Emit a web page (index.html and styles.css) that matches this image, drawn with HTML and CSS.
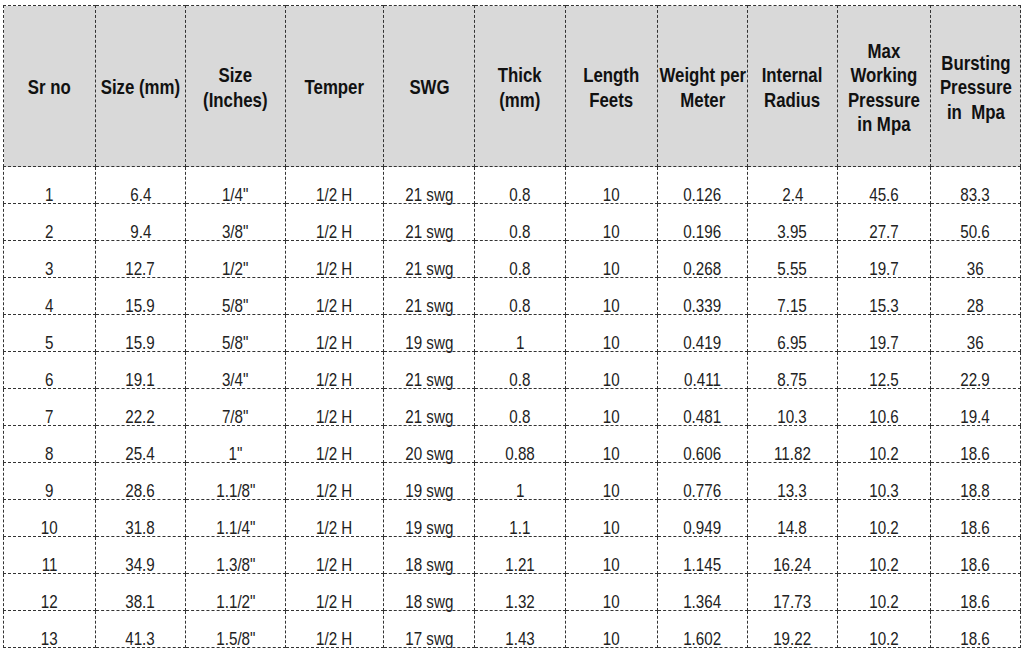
FILE: index.html
```html
<!DOCTYPE html>
<html lang="en">
<head>
<meta charset="utf-8">
<title>Copper Tube Specifications</title>
<link rel="stylesheet" href="styles.css">
</head>
<body>
<table class="spec">
  <colgroup>
    <col class="c1"><col class="c2"><col class="c3"><col class="c4"><col class="c5"><col class="c6">
    <col class="c7"><col class="c8"><col class="c9"><col class="c10"><col class="c11">
  </colgroup>
  <thead>
    <tr>
      <th><span class="n">Sr no</span></th>
      <th><span class="n">Size (mm)</span></th>
      <th><span class="n">Size<br>(Inches)</span></th>
      <th><span class="n">Temper</span></th>
      <th><span class="n">SWG</span></th>
      <th><span class="n">Thick<br>(mm)</span></th>
      <th><span class="n">Length<br>Feets</span></th>
      <th><span class="n">Weight per<br>Meter</span></th>
      <th><span class="n">Internal<br>Radius</span></th>
      <th><span class="n">Max<br>Working<br>Pressure<br>in Mpa</span></th>
      <th><span class="n">Bursting<br>Pressure<br>in&nbsp; Mpa</span></th>
    </tr>
  </thead>
  <tbody>
    <tr><td><span class="n">1</span></td><td><span class="n">6.4</span></td><td><span class="n">1/4"</span></td><td><span class="n">1/2 H</span></td><td><span class="n">21 swg</span></td><td><span class="n">0.8</span></td><td><span class="n">10</span></td><td><span class="n">0.126</span></td><td><span class="n">2.4</span></td><td><span class="n">45.6</span></td><td><span class="n">83.3</span></td></tr>
    <tr><td><span class="n">2</span></td><td><span class="n">9.4</span></td><td><span class="n">3/8"</span></td><td><span class="n">1/2 H</span></td><td><span class="n">21 swg</span></td><td><span class="n">0.8</span></td><td><span class="n">10</span></td><td><span class="n">0.196</span></td><td><span class="n">3.95</span></td><td><span class="n">27.7</span></td><td><span class="n">50.6</span></td></tr>
    <tr><td><span class="n">3</span></td><td><span class="n">12.7</span></td><td><span class="n">1/2"</span></td><td><span class="n">1/2 H</span></td><td><span class="n">21 swg</span></td><td><span class="n">0.8</span></td><td><span class="n">10</span></td><td><span class="n">0.268</span></td><td><span class="n">5.55</span></td><td><span class="n">19.7</span></td><td><span class="n">36</span></td></tr>
    <tr><td><span class="n">4</span></td><td><span class="n">15.9</span></td><td><span class="n">5/8"</span></td><td><span class="n">1/2 H</span></td><td><span class="n">21 swg</span></td><td><span class="n">0.8</span></td><td><span class="n">10</span></td><td><span class="n">0.339</span></td><td><span class="n">7.15</span></td><td><span class="n">15.3</span></td><td><span class="n">28</span></td></tr>
    <tr><td><span class="n">5</span></td><td><span class="n">15.9</span></td><td><span class="n">5/8"</span></td><td><span class="n">1/2 H</span></td><td><span class="n">19 swg</span></td><td><span class="n">1</span></td><td><span class="n">10</span></td><td><span class="n">0.419</span></td><td><span class="n">6.95</span></td><td><span class="n">19.7</span></td><td><span class="n">36</span></td></tr>
    <tr><td><span class="n">6</span></td><td><span class="n">19.1</span></td><td><span class="n">3/4"</span></td><td><span class="n">1/2 H</span></td><td><span class="n">21 swg</span></td><td><span class="n">0.8</span></td><td><span class="n">10</span></td><td><span class="n">0.411</span></td><td><span class="n">8.75</span></td><td><span class="n">12.5</span></td><td><span class="n">22.9</span></td></tr>
    <tr><td><span class="n">7</span></td><td><span class="n">22.2</span></td><td><span class="n">7/8"</span></td><td><span class="n">1/2 H</span></td><td><span class="n">21 swg</span></td><td><span class="n">0.8</span></td><td><span class="n">10</span></td><td><span class="n">0.481</span></td><td><span class="n">10.3</span></td><td><span class="n">10.6</span></td><td><span class="n">19.4</span></td></tr>
    <tr><td><span class="n">8</span></td><td><span class="n">25.4</span></td><td><span class="n">1"</span></td><td><span class="n">1/2 H</span></td><td><span class="n">20 swg</span></td><td><span class="n">0.88</span></td><td><span class="n">10</span></td><td><span class="n">0.606</span></td><td><span class="n">11.82</span></td><td><span class="n">10.2</span></td><td><span class="n">18.6</span></td></tr>
    <tr><td><span class="n">9</span></td><td><span class="n">28.6</span></td><td><span class="n">1.1/8"</span></td><td><span class="n">1/2 H</span></td><td><span class="n">19 swg</span></td><td><span class="n">1</span></td><td><span class="n">10</span></td><td><span class="n">0.776</span></td><td><span class="n">13.3</span></td><td><span class="n">10.3</span></td><td><span class="n">18.8</span></td></tr>
    <tr><td><span class="n">10</span></td><td><span class="n">31.8</span></td><td><span class="n">1.1/4"</span></td><td><span class="n">1/2 H</span></td><td><span class="n">19 swg</span></td><td><span class="n">1.1</span></td><td><span class="n">10</span></td><td><span class="n">0.949</span></td><td><span class="n">14.8</span></td><td><span class="n">10.2</span></td><td><span class="n">18.6</span></td></tr>
    <tr><td><span class="n">11</span></td><td><span class="n">34.9</span></td><td><span class="n">1.3/8"</span></td><td><span class="n">1/2 H</span></td><td><span class="n">18 swg</span></td><td><span class="n">1.21</span></td><td><span class="n">10</span></td><td><span class="n">1.145</span></td><td><span class="n">16.24</span></td><td><span class="n">10.2</span></td><td><span class="n">18.6</span></td></tr>
    <tr><td><span class="n">12</span></td><td><span class="n">38.1</span></td><td><span class="n">1.1/2"</span></td><td><span class="n">1/2 H</span></td><td><span class="n">18 swg</span></td><td><span class="n">1.32</span></td><td><span class="n">10</span></td><td><span class="n">1.364</span></td><td><span class="n">17.73</span></td><td><span class="n">10.2</span></td><td><span class="n">18.6</span></td></tr>
    <tr><td><span class="n">13</span></td><td><span class="n">41.3</span></td><td><span class="n">1.5/8"</span></td><td><span class="n">1/2 H</span></td><td><span class="n">17 swg</span></td><td><span class="n">1.43</span></td><td><span class="n">10</span></td><td><span class="n">1.602</span></td><td><span class="n">19.22</span></td><td><span class="n">10.2</span></td><td><span class="n">18.6</span></td></tr>
  </tbody>
</table>
</body>
</html>
```
FILE: styles.css
```css
html, body {
  margin: 0;
  padding: 0;
  background: #ffffff;
}

body {
  font-family: "Liberation Sans", Arial, sans-serif;
  color: #1a1a1a;
}

.spec {
  margin: 5px 0 0 3px;
  border-collapse: collapse;
  table-layout: fixed;
  width: 1017px;
}

.c1 { width: 92px; }
.c2 { width: 90px; }
.c3 { width: 100px; }
.c4 { width: 98px; }
.c5 { width: 91px; }
.c6 { width: 91px; }
.c7 { width: 92px; }
.c8 { width: 90px; }
.c9 { width: 90px; }
.c10 { width: 93px; }
.c11 { width: 90px; }

.spec th,
.spec td {
  border: 1px dashed #333333;
  padding: 0;
  text-align: center;
  white-space: nowrap;
  overflow: visible;
}

/* narrow (condensed) rendering of the text, like Arial Narrow;
   negative side margins keep wide labels centred in their column */
.n {
  display: inline-block;
  margin: 0 -24px;
  transform: scaleX(0.82);
  transform-origin: center;
}

.spec th {
  height: 157px;
  padding-top: 3px;
  background: #d9d9d9;
  font-size: 20.5px;
  font-weight: bold;
  line-height: 24.5px;
  color: #111111;
  vertical-align: middle;
}

.spec td {
  height: 36px;
  font-size: 18.5px;
  line-height: 16px;
  vertical-align: bottom;
  color: #222222;
}
```
